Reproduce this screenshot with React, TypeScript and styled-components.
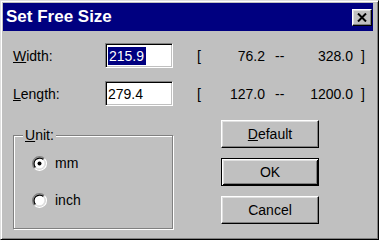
import React from "react";
import styled, { createGlobalStyle, css } from "styled-components";

const GlobalStyle = createGlobalStyle`
  body {
    margin: 0;
    background: #c0c0c0;
  }
`;

const Window = styled.div`
  width: 379px;
  height: 240px;
  box-sizing: border-box;
  background: #c0c0c0;
  border: 1px solid;
  border-color: #dfdfdf #000 #000 #dfdfdf;
  box-shadow: inset 1px 1px #fff, inset -1px -1px #808080;
  padding: 2px 5px 2px 2px;
  font-family: "Liberation Sans", Arial, sans-serif;
  font-size: 14px;
  color: #000;
`;

const TitleBar = styled.div`
  height: 28px;
  display: flex;
  align-items: center;
  justify-content: space-between;
  background: #000080;
  padding: 0 1px 0 3px;
`;

const Title = styled.span`
  color: #fff;
  font-weight: bold;
  font-size: 17px;
`;

const CloseButton = styled.div`
  width: 20px;
  height: 17px;
  box-sizing: border-box;
  background: #c0c0c0;
  border: 1px solid;
  border-color: #fff #000 #000 #fff;
  box-shadow: inset -1px -1px #808080, inset 1px 1px #dfdfdf;
  display: flex;
  align-items: center;
  justify-content: center;
`;

const Body = styled.div`
  padding: 12px 0 0 10px;
`;

const FieldRow = styled.div`
  display: flex;
  align-items: center;
  height: 25px;

  & + & {
    margin-top: 13px;
  }
`;

const Label = styled.span`
  width: 92px;
`;

const U = styled.span`
  text-decoration: underline;
`;

const Field = styled.div`
  width: 68px;
  height: 25px;
  box-sizing: border-box;
  background: #fff;
  border: 1px solid;
  border-color: #808080 #fff #fff #808080;
  box-shadow: inset 1px 1px #000, inset -1px -1px #c0c0c0;
  padding-left: 2px;
  display: flex;
  align-items: center;
`;

const Selected = styled.span`
  background: #000080;
  color: #fff;
  padding: 1px 2px 1px 1px;
`;

const Range = styled.div`
  margin-left: 24px;
  display: grid;
  grid-template-columns: 4px 64px 20px 68px 12px;
`;

const Num = styled.span`
  text-align: right;
`;

const Dash = styled.span`
  padding-left: 10px;
`;

const Close = styled.span`
  text-align: right;
`;

const Bottom = styled.div`
  display: flex;
  align-items: flex-start;
  margin-top: 14px;
`;

const Group = styled.fieldset`
  margin: 7px 0 0 0;
  width: 160px;
  height: 102px;
  box-sizing: border-box;
  min-width: 0;
  padding: 10px 0 0 9px;
  border: 1px solid #808080;
  box-shadow: inset 1px 1px #fff, 1px 1px #fff;
`;

const Legend = styled.legend`
  padding: 0 2px;
  line-height: 16px;
  background: #c0c0c0;
`;

const RadioList = styled.div`
  display: flex;
  flex-direction: column;
  gap: 17px;
  margin-left: 9px;
`;

const RadioRow = styled.div`
  display: flex;
  align-items: center;
  height: 20px;
  gap: 8px;
`;

const ButtonColumn = styled.div`
  margin-left: 48px;
  width: 98px;
  display: flex;
  flex-direction: column;
  gap: 10px;
`;

const Button = styled.div<{ $primary?: boolean }>`
  height: 28px;
  box-sizing: border-box;
  display: flex;
  align-items: center;
  justify-content: center;
  background: #c0c0c0;
  ${(p) =>
    p.$primary
      ? css`
          border: 1px solid #000;
          box-shadow: inset 1px 1px #fff, inset -1px -1px #000,
            inset 2px 2px #dfdfdf, inset -2px -2px #808080;
        `
      : css`
          border: 1px solid;
          border-color: #fff #000 #000 #fff;
          box-shadow: inset -1px -1px #808080, inset 1px 1px #dfdfdf;
        `}
`;

const Radio = ({ checked }: { checked?: boolean }) => (
  <svg width="15" height="15" viewBox="0 0 12 12">
    <circle cx="6" cy="6" r="4.5" fill="#fff" />
    <path d="M2.11 9.89 A5.5 5.5 0 0 1 9.89 2.11" stroke="#808080" fill="none" />
    <path d="M9.89 2.11 A5.5 5.5 0 0 1 2.11 9.89" stroke="#fff" fill="none" />
    <path d="M2.82 9.18 A4.5 4.5 0 0 1 9.18 2.82" stroke="#000" fill="none" />
    <path d="M9.18 2.82 A4.5 4.5 0 0 1 2.82 9.18" stroke="#dfdfdf" fill="none" />
    {checked && <circle cx="6" cy="6" r="1.6" fill="#000" />}
  </svg>
);

const rows = [
  { key: "W", rest: "idth:", value: "215.9", min: "76.2", max: "328.0", selected: true },
  { key: "L", rest: "ength:", value: "279.4", min: "127.0", max: "1200.0", selected: false },
];

export default function App() {
  return (
    <>
      <GlobalStyle />
      <Window>
        <TitleBar>
          <Title>Set Free Size</Title>
          <CloseButton>
            <svg width="10" height="9" viewBox="0 0 10 9">
              <path d="M1 0.5 L9 8.5 M9 0.5 L1 8.5" stroke="#000" strokeWidth="2" />
            </svg>
          </CloseButton>
        </TitleBar>
        <Body>
          {rows.map((r) => (
            <FieldRow key={r.key}>
              <Label>
                <U>{r.key}</U>
                {r.rest}
              </Label>
              <Field>{r.selected ? <Selected>{r.value}</Selected> : r.value}</Field>
              <Range>
                <span>[</span>
                <Num>{r.min}</Num>
                <Dash>--</Dash>
                <Num>{r.max}</Num>
                <Close>]</Close>
              </Range>
            </FieldRow>
          ))}
          <Bottom>
            <Group>
              <Legend>
                <U>U</U>nit:
              </Legend>
              <RadioList>
                <RadioRow>
                  <Radio checked />
                  <span>mm</span>
                </RadioRow>
                <RadioRow>
                  <Radio />
                  <span>inch</span>
                </RadioRow>
              </RadioList>
            </Group>
            <ButtonColumn>
              <Button>
                <span>
                  <U>D</U>efault
                </span>
              </Button>
              <Button $primary>OK</Button>
              <Button>Cancel</Button>
            </ButtonColumn>
          </Bottom>
        </Body>
      </Window>
    </>
  );
}
